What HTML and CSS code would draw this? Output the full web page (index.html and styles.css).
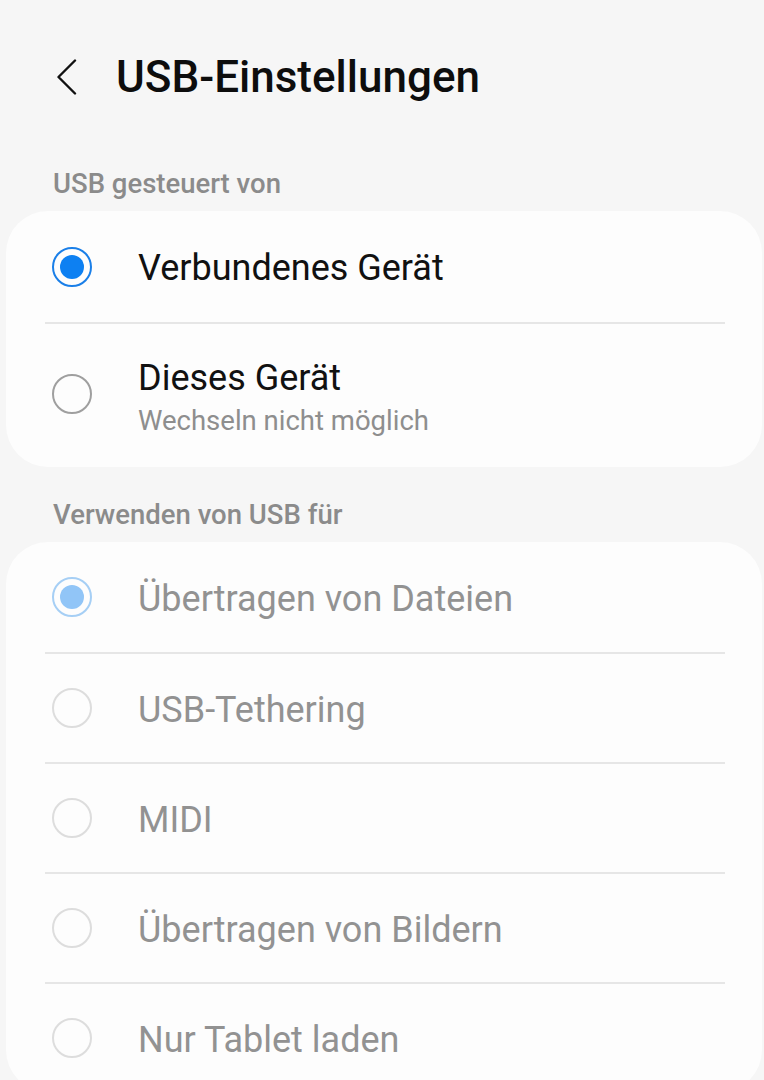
FILE: index.html
```html
<!DOCTYPE HTML>
<html>

<head>
    <meta charset="utf-8">
    <title>USB-Einstellungen</title>
    <link rel="stylesheet" href="styles.css">
</head>

<body>
<div class="page">
    <div class="top">
        <a href="javascript:;" class="back">
            <svg width="24" height="36" viewBox="0 0 24 36">
                <path d="M20 1.5 L3.5 18 L20 34.5" fill="none" stroke="#111" stroke-width="2.4" stroke-linecap="round" stroke-linejoin="round"/>
            </svg>
        </a>
        <h1>USB-Einstellungen</h1>
    </div>

    <h2 class="sec">USB gesteuert von</h2>
    <ul class="card">
        <li class="row first">
            <span class="radio on"></span>
            <div class="txt">
                <p class="name">Verbundenes Gerät</p>
            </div>
        </li>
        <li class="row tall">
            <span class="radio"></span>
            <div class="txt">
                <p class="name">Dieses Gerät</p>
                <p class="sub">Wechseln nicht möglich</p>
            </div>
        </li>
    </ul>

    <h2 class="sec sec2">Verwenden von USB für</h2>
    <ul class="card dis">
        <li class="row">
            <span class="radio on"></span>
            <div class="txt"><p class="name">Übertragen von Dateien</p></div>
        </li>
        <li class="row">
            <span class="radio"></span>
            <div class="txt"><p class="name">USB-Tethering</p></div>
        </li>
        <li class="row">
            <span class="radio"></span>
            <div class="txt"><p class="name">MIDI</p></div>
        </li>
        <li class="row">
            <span class="radio"></span>
            <div class="txt"><p class="name">Übertragen von Bildern</p></div>
        </li>
        <li class="row">
            <span class="radio"></span>
            <div class="txt"><p class="name">Nur Tablet laden</p></div>
        </li>
    </ul>
</div>
</body>

</html>
```

FILE: styles.css
```css
* {
    margin: 0;
    padding: 0;
}

li {
    list-style: none;
}

html, body {
    background: #f6f6f6;
}

body {
    font-family: Roboto, "Noto Sans", sans-serif;
    color: #111;
    overflow: hidden;
}

.page {
    width: 764px;
    height: 1080px;
}

.top {
    display: flex;
    align-items: center;
    height: 90px;
    padding-top: 32px;
    padding-left: 55px;
}

.back {
    display: flex;
    width: 24px;
    height: 36px;
    margin-right: 37px;
}

.top h1 {
    font-size: 44px;
    font-weight: 500;
    color: #0d0d0d;
}

.sec {
    font-size: 27.5px;
    font-weight: 500;
    color: #8b8b8b;
    padding-left: 53px;
    margin-top: 36px;
    height: 53px;
    line-height: 52px;
}

.sec2 {
    margin-top: 14px;
    height: 61px;
    line-height: 67px;
}

.card {
    background: #fdfdfd;
    border-radius: 42px;
    margin-left: 6px;
    margin-right: 2px;
    padding: 0 37px 0 39px;
}

.row {
    display: flex;
    align-items: center;
    height: 108px;
    border-top: 2px solid #e6e6e6;
}

.row:first-child {
    border-top: none;
    height: 110px;
}

.row .txt {
    margin-top: 3px;
}

.card .first {
    height: 111px;
}

.card .tall {
    height: 143px;
}

.radio {
    width: 36px;
    height: 36px;
    border: 2px solid #9f9f9f;
    border-radius: 50%;
    margin-left: 7px;
    margin-right: 46px;
    position: relative;
    flex-shrink: 0;
}

.radio.on {
    border-color: #1a7fe8;
}

.radio.on::after {
    content: "";
    position: absolute;
    left: 6px;
    top: 6px;
    width: 24px;
    height: 24px;
    border-radius: 50%;
    background: #0d80f2;
}

.name {
    font-size: 36px;
    line-height: 42px;
    color: #111;
}

.sub {
    font-size: 27.5px;
    line-height: 36px;
    color: #8e8e8e;
    margin-top: 4px;
}

.card .tall .txt {
    margin-top: 4px;
}

.tall .radio {
    margin-top: -4px;
}

.dis .name {
    color: #929292;
}

.dis .radio {
    border-color: #dddddd;
}

.dis .radio.on {
    border-color: #a6cff5;
}

.dis .radio.on::after {
    background: #91c5f7;
}
```
